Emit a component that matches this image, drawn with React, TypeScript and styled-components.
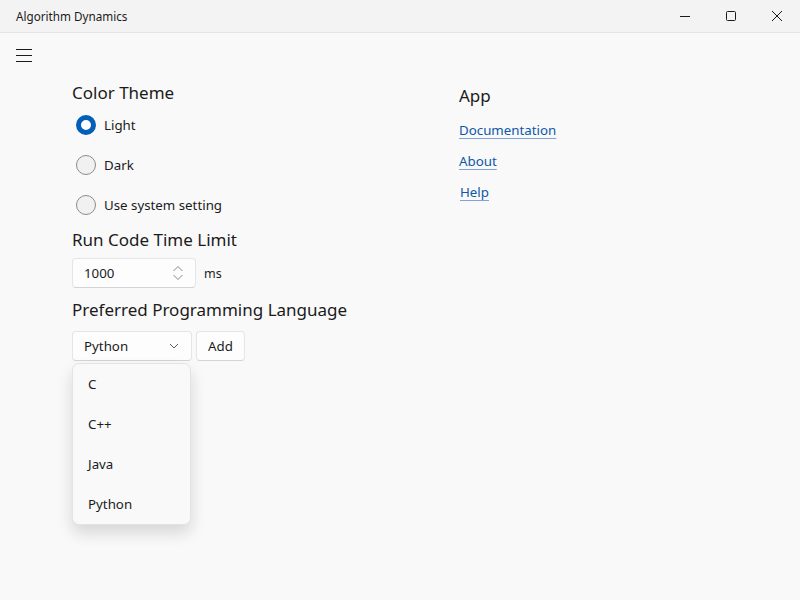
import styled, { createGlobalStyle } from "styled-components";

const GlobalStyle = createGlobalStyle`
  html, body {
    margin: 0;
    padding: 0;
    background: #f9f9f9;
  }
  body {
    font-family: "Noto Sans", "Open Sans", sans-serif;
    color: #1b1b1b;
  }
`;

const languages = ["C", "C++", "Java", "Python"];

const themes = [
  { label: "Light", checked: true },
  { label: "Dark", checked: false },
  { label: "Use system setting", checked: false },
];

const links = ["Documentation", "About", "Help"];

const App = () => {
  return (
    <Window>
      <GlobalStyle />
      <TitleBar>
        <TitleText>Algorithm Dynamics</TitleText>
        <Controls>
          <ControlButton>
            <svg width="10" height="10" viewBox="0 0 10 10">
              <path d="M0 5.5h10" stroke="#1b1b1b" strokeWidth="1" />
            </svg>
          </ControlButton>
          <ControlButton>
            <svg width="10" height="10" viewBox="0 0 10 10">
              <rect x="0.5" y="0.5" width="9" height="9" rx="1" fill="none" stroke="#1b1b1b" strokeWidth="1" />
            </svg>
          </ControlButton>
          <ControlButton>
            <svg width="10" height="10" viewBox="0 0 10 10">
              <path d="M0 0L10 10M10 0L0 10" stroke="#1b1b1b" strokeWidth="1" />
            </svg>
          </ControlButton>
        </Controls>
      </TitleBar>
      <Body>
        <NavRail>
          <svg width="16" height="14" viewBox="0 0 16 14">
            <path d="M0 1.5h16M0 7.5h16M0 13.5h16" stroke="#1b1b1b" strokeWidth="1" />
          </svg>
        </NavRail>
        <Content>
          <Column>
            <Header>Color Theme</Header>
            {themes.map((t) => (
              <RadioRow key={t.label}>
                <Radio checked={t.checked} />
                <span>{t.label}</span>
              </RadioRow>
            ))}
            <Header $top={3}>Run Code Time Limit</Header>
            <InlineRow $top={6}>
              <NumberBox>
                <span>1000</span>
                <svg width="12" height="16" viewBox="0 0 12 16">
                  <path d="M1.5 6L6 1.5L10.5 6M1.5 10L6 14.5L10.5 10" fill="none" stroke="#8a8a8a" strokeWidth="1" />
                </svg>
              </NumberBox>
              <Unit>ms</Unit>
            </InlineRow>
            <Header $top={10}>Preferred Programming Language</Header>
            <InlineRow $top={9} $gap={4}>
              <ComboWrap>
                <ComboBox>
                  <span>Python</span>
                  <svg width="10" height="6" viewBox="0 0 10 6">
                    <path d="M1 1L5 5L9 1" fill="none" stroke="#5c5c5c" strokeWidth="1" />
                  </svg>
                </ComboBox>
                <Popup>
                  {languages.map((l) => (
                    <PopupItem key={l}>{l}</PopupItem>
                  ))}
                </Popup>
              </ComboWrap>
              <Button>Add</Button>
            </InlineRow>
          </Column>
          <Column>
            <Header $top={3}>App</Header>
            <LinkList>
              {links.map((l) => (
                <Link key={l} $indent={l === "Help" ? 1 : 0}>
                  {l}
                </Link>
              ))}
            </LinkList>
          </Column>
        </Content>
      </Body>
    </Window>
  );
};

const Window = styled.div`
  width: 800px;
  height: 600px;
  display: flex;
  flex-direction: column;
  background: #f9f9f9;
  overflow: hidden;
`;

const TitleBar = styled.div`
  height: 32px;
  flex-shrink: 0;
  display: flex;
  align-items: center;
  justify-content: space-between;
  background: #f3f3f3;
  border-bottom: 1px solid #e5e5e5;
`;

const TitleText = styled.div`
  padding-left: 16px;
  font-size: 11.7px;
  color: #1b1b1b;
`;

const Controls = styled.div`
  display: flex;
  height: 100%;
`;

const ControlButton = styled.div`
  width: 46px;
  height: 100%;
  display: flex;
  align-items: center;
  justify-content: center;
`;

const Body = styled.div`
  flex: 1;
  display: flex;
`;

const NavRail = styled.div`
  width: 48px;
  flex-shrink: 0;
  padding: 15px 0 0 16px;
  box-sizing: border-box;
  line-height: 0;
`;

const Content = styled.div`
  flex: 1;
  display: grid;
  grid-template-columns: 387px 1fr;
  padding: 48px 0 0 24px;
  align-items: start;
`;

const Column = styled.div`
  display: flex;
  flex-direction: column;
  align-items: flex-start;
`;

const Header = styled.div<{ $top?: number }>`
  margin-top: ${(p) => p.$top ?? 0}px;
  font-size: 17px;
  line-height: 24px;
  color: #1b1b1b;
`;

const RadioRow = styled.div`
  height: 40px;
  display: flex;
  align-items: center;
  gap: 8px;
  padding-left: 4px;
  font-size: 13.3px;
`;

const Radio = styled.div<{ checked: boolean }>`
  width: 20px;
  height: 20px;
  border-radius: 50%;
  box-sizing: border-box;
  border: ${(p) => (p.checked ? "5px solid #005fb8" : "1px solid #8b8b8b")};
  background: ${(p) => (p.checked ? "#ffffff" : "#f1f1f1")};
`;

const InlineRow = styled.div<{ $top?: number; $gap?: number }>`
  margin-top: ${(p) => p.$top ?? 0}px;
  display: flex;
  align-items: center;
  gap: ${(p) => p.$gap ?? 5}px;
`;

const Field = styled.div`
  height: 30px;
  box-sizing: border-box;
  display: flex;
  align-items: center;
  justify-content: space-between;
  background: #fdfdfd;
  border: 1px solid #e5e5e5;
  border-bottom-color: #d4d4d4;
  border-radius: 4px;
  font-size: 13.3px;
  color: #1b1b1b;
`;

const NumberBox = styled(Field)`
  width: 124px;
  padding: 0 11px;
`;

const Unit = styled.span`
  margin-left: 3px;
  font-size: 12.5px;
`;

const ComboWrap = styled.div`
  position: relative;
`;

const ComboBox = styled(Field)`
  width: 120px;
  padding: 0 12px 0 11px;
`;

const Button = styled(Field)`
  padding: 0 11px;
`;

const Popup = styled.div`
  position: absolute;
  top: 32px;
  left: 0;
  width: 119px;
  background: #f9f9f9;
  border: 1px solid #e3e3e3;
  border-radius: 7px;
  box-shadow: 0 8px 16px rgba(0, 0, 0, 0.14);
  box-sizing: border-box;
`;

const PopupItem = styled.div`
  height: 40px;
  display: flex;
  align-items: center;
  padding-left: 15px;
  font-size: 13.3px;
`;

const LinkList = styled.div`
  margin-top: 7px;
  display: flex;
  flex-direction: column;
`;

const Link = styled.a<{ $indent: number }>`
  height: 31px;
  line-height: 31px;
  margin-left: ${(p) => p.$indent}px;
  font-size: 13.3px;
  color: #0d57a8;
  text-decoration: underline;
  text-decoration-color: #7fa3d4;
  text-underline-offset: 3px;
`;

export default App;
